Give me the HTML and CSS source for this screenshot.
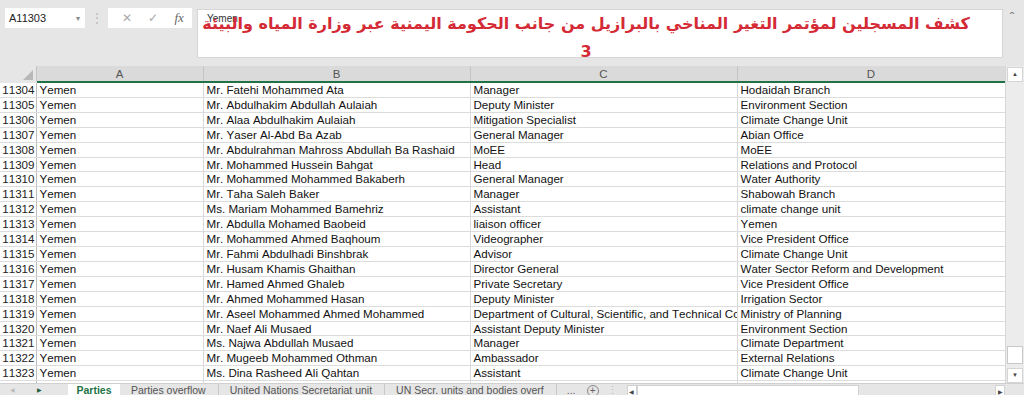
FILE: index.html
```html
<!DOCTYPE html>
<html lang="en">
<head>
    <meta charset="UTF-8">
    <meta name="viewport" content="width=device-width, initial-scale=1.0">
    <title>Parties - Yemen</title>
    <link rel="stylesheet" href="styles.css">
</head>
<body>
<div class="app">
    <div class="topbar">
        <div class="namebox">A11303<span class="caret">&#9662;</span></div>
        <div class="vdots">&#8942;</div>
        <div class="fxbox">
            <span class="fxicon">&#10005;</span>
            <span class="fxicon">&#10003;</span>
            <span class="fxicon fx">fx</span>
        </div>
        <div class="formula">
            <span class="fvalue">Yemen</span>
            <div class="caption" dir="rtl">كشف المسجلين  لمؤتمر التغير المناخي بالبرازيل من جانب الحكومة اليمنية عبر وزارة المياه والبيئة<br>3</div>
        </div>
        <div class="collapse">&#710;</div>
    </div>

    <div class="sheet">
        <div class="gridwrap">
            <table class="grid">
                <colgroup>
                    <col class="c-row"><col class="c-a"><col class="c-b"><col class="c-c"><col class="c-d">
                </colgroup>
                <thead>
                    <tr><th class="corner"><span class="tri"></span></th><th>A</th><th>B</th><th>C</th><th>D</th></tr>
                </thead>
                <tbody>
                    <tr><td class="rn">11304</td><td>Yemen</td><td>Mr. Fatehi Mohammed Ata</td><td>Manager</td><td>Hodaidah Branch</td></tr>
                    <tr><td class="rn">11305</td><td>Yemen</td><td>Mr. Abdulhakim Abdullah Aulaiah</td><td>Deputy Minister</td><td>Environment Section</td></tr>
                    <tr><td class="rn">11306</td><td>Yemen</td><td>Mr. Alaa Abdulhakim Aulaiah</td><td>Mitigation Specialist</td><td>Climate Change Unit</td></tr>
                    <tr><td class="rn">11307</td><td>Yemen</td><td>Mr. Yaser Al-Abd Ba Azab</td><td>General Manager</td><td>Abian Office</td></tr>
                    <tr><td class="rn">11308</td><td>Yemen</td><td>Mr. Abdulrahman Mahross Abdullah Ba Rashaid</td><td>MoEE</td><td>MoEE</td></tr>
                    <tr><td class="rn">11309</td><td>Yemen</td><td>Mr. Mohammed Hussein Bahgat</td><td>Head</td><td>Relations and Protocol</td></tr>
                    <tr><td class="rn">11310</td><td>Yemen</td><td>Mr. Mohammed Mohammed Bakaberh</td><td>General Manager</td><td>Water Authority</td></tr>
                    <tr><td class="rn">11311</td><td>Yemen</td><td>Mr. Taha Saleh Baker</td><td>Manager</td><td>Shabowah Branch</td></tr>
                    <tr><td class="rn">11312</td><td>Yemen</td><td>Ms. Mariam Mohammed Bamehriz</td><td>Assistant</td><td>climate change unit</td></tr>
                    <tr><td class="rn">11313</td><td>Yemen</td><td>Mr. Abdulla Mohamed Baobeid</td><td>liaison officer</td><td>Yemen</td></tr>
                    <tr><td class="rn">11314</td><td>Yemen</td><td>Mr. Mohammed Ahmed Baqhoum</td><td>Videographer</td><td>Vice President Office</td></tr>
                    <tr><td class="rn">11315</td><td>Yemen</td><td>Mr. Fahmi Abdulhadi Binshbrak</td><td>Advisor</td><td>Climate Change Unit</td></tr>
                    <tr><td class="rn">11316</td><td>Yemen</td><td>Mr. Husam Khamis Ghaithan</td><td>Director General</td><td>Water Sector Reform and Development</td></tr>
                    <tr><td class="rn">11317</td><td>Yemen</td><td>Mr. Hamed Ahmed Ghaleb</td><td>Private Secretary</td><td>Vice President Office</td></tr>
                    <tr><td class="rn">11318</td><td>Yemen</td><td>Mr. Ahmed Mohammed Hasan</td><td>Deputy Minister</td><td>Irrigation Sector</td></tr>
                    <tr><td class="rn">11319</td><td>Yemen</td><td>Mr. Aseel Mohammed Ahmed Mohammed</td><td>Department of Cultural, Scientific, and Technical Cooperation</td><td>Ministry of Planning</td></tr>
                    <tr><td class="rn">11320</td><td>Yemen</td><td>Mr. Naef Ali Musaed</td><td>Assistant Deputy Minister</td><td>Environment Section</td></tr>
                    <tr><td class="rn">11321</td><td>Yemen</td><td>Ms. Najwa Abdullah Musaed</td><td>Manager</td><td>Climate Department</td></tr>
                    <tr><td class="rn">11322</td><td>Yemen</td><td>Mr. Mugeeb Mohammed Othman</td><td>Ambassador</td><td>External Relations</td></tr>
                    <tr><td class="rn">11323</td><td>Yemen</td><td>Ms. Dina Rasheed Ali Qahtan</td><td>Assistant</td><td>Climate Change Unit</td></tr>
                    <tr><td class="rn"></td><td></td><td></td><td></td><td></td></tr>
                </tbody>
            </table>
        </div>
        <div class="vscroll">
            <div class="sbtn">&#9650;</div>
            <div class="vtrack"><div class="vthumb"></div></div>
            <div class="sbtn">&#9660;</div>
        </div>
    </div>

    <div class="tabbar">
        <div class="navs"><span class="nav dim">&#9664;</span><span class="nav">&#9654;</span></div>
        <div class="tab active">Parties</div>
        <div class="tab">Parties overflow</div>
        <div class="tab">United Nations Secretariat unit</div>
        <div class="tab">UN Secr. units and bodies overf</div>
        <div class="more">...</div>
        <div class="plus">+</div>
        <div class="tdots">&#8942;</div>
        <div class="hscroll">
            <span class="hbtn">&#9664;</span>
            <div class="hthumb"></div>
            <div class="hrest"></div>
            <span class="hbtn">&#9654;</span>
        </div>
    </div>
</div>
</body>
</html>
```

FILE: styles.css
```css
body {
    margin: 0;
    font-family: "Liberation Sans", Arial, sans-serif;
    background: #e6e6e6;
    overflow: hidden;
}
.app {
    height: 395px;
    display: flex;
    flex-direction: column;
    overflow: hidden;
}

/* formula bar */
.topbar {
    height: 66px;
    flex: none;
    display: flex;
    align-items: flex-start;
    padding: 8px 0 0 5px;
    box-sizing: border-box;
    background: #e6e6e6;
}
.namebox {
    width: 80px;
    height: 20px;
    background: #fff;
    font-size: 11px;
    color: #222;
    display: flex;
    align-items: center;
    justify-content: space-between;
    padding: 0 5px 0 4px;
    box-sizing: border-box;
}
.caret {
    font-size: 8px;
    color: #888;
}
.vdots {
    width: 23px;
    text-align: center;
    color: #b8b8b8;
    font-size: 12px;
    line-height: 20px;
}
.fxbox {
    width: 84px;
    height: 20px;
    background: #fff;
    display: flex;
    align-items: center;
    justify-content: space-around;
    padding: 0 0 0 6px;
    box-sizing: border-box;
}
.fxicon {
    color: #aaa;
    font-size: 12px;
}
.fxicon.fx {
    font-family: "Liberation Serif", serif;
    font-style: italic;
    color: #666;
    font-size: 13px;
}
.formula {
    position: relative;
    width: 806px;
    height: 49px;
    margin: 1px 0 0 5px;
    background: #fff;
    border: 1px solid #d6d6d6;
    box-sizing: border-box;
}
.fvalue {
    position: absolute;
    left: 9px;
    top: 3px;
    font-size: 10px;
    color: #333;
}
.caption {
    position: absolute;
    left: -6px;
    right: 22px;
    top: 0;
    text-align: center;
    white-space: nowrap;
    font-family: "DejaVu Sans", sans-serif;
    font-weight: bold;
    font-size: 16px;
    line-height: 28px;
    color: #d42a35;
}
.collapse {
    width: 18px;
    text-align: center;
    font-size: 14px;
    color: #777;
    line-height: 20px;
}

/* sheet */
.sheet {
    flex: none;
    height: 317px;
    display: flex;
    background: #fff;
}
.gridwrap {
    width: 1005px;
    overflow: hidden;
}
.grid {
    border-collapse: collapse;
    table-layout: fixed;
    width: 1005px;
    font-size: 11.6px;
    color: #111;
    font-kerning: none;
    font-variant-numeric: tabular-nums;
}
.c-row { width: 36px; }
.c-a { width: 167px; }
.c-b { width: 267px; }
.c-c { width: 267px; }
.c-d { width: 268px; }
.grid th {
    height: 15px;
    padding: 0;
    background: #dadada;
    color: #555;
    font-weight: normal;
    font-size: 11.5px;
    border-right: 1px solid #c4c4c4;
    border-bottom: 2px solid #217346;
}
.grid th.corner {
    position: relative;
    background: #e6e6e6;
    border-bottom-color: #e6e6e6;
}
.tri {
    position: absolute;
    right: 3px;
    bottom: 1px;
    width: 0;
    height: 0;
    border-left: 10px solid transparent;
    border-bottom: 10px solid #b8b8b8;
}
.grid td {
    height: 13.9px;
    padding: 0 0 0 3px;
    line-height: 13.9px;
    white-space: nowrap;
    overflow: hidden;
    border-right: 1px solid #d9d9d9;
    border-bottom: 1px solid #dcdcdc;
}
.grid td.rn {
    text-align: right;
    padding: 0 1px 0 0;
    color: #222;
    border-right: 1px solid #bdbdbd;
}

.vscroll {
    width: 19px;
    display: flex;
    flex-direction: column;
    background: #ececec;
    border-left: 1px solid #d6d6d6;
    box-sizing: border-box;
}
.sbtn {
    height: 15px;
    margin: 1px 1px 0;
    background: #fff;
    border: 1px solid #d4d4d4;
    box-sizing: border-box;
    font-size: 6px;
    color: #444;
    text-align: center;
    line-height: 13px;
}
.vtrack {
    flex: 1;
    display: flex;
    flex-direction: column;
    justify-content: flex-end;
    padding: 0 1px 3px;
}
.vthumb {
    height: 18px;
    background: #fff;
    border: 1px solid #c8c8c8;
    box-sizing: border-box;
}

/* sheet tabs */
.tabbar {
    flex: none;
    height: 20px;
    display: flex;
    align-items: flex-start;
    background: #e6e6e6;
    font-size: 10.5px;
    color: #444;
    border-top: 1px solid #d0d0d0;
}
.navs {
    width: 68px;
    display: flex;
    gap: 22px;
    padding-left: 10px;
    box-sizing: border-box;
}
.nav {
    font-size: 6px;
    line-height: 13px;
    color: #1e5e3a;
}
.nav.dim {
    color: #bbb;
}
.tab {
    padding: 0 12px 0 11px;
    line-height: 13px;
    border-right: 1px solid #c8c8c8;
    color: #555;
}
.tab.active {
    width: 52px;
    padding: 0;
    text-align: center;
    box-sizing: border-box;
    background: #fff;
    color: #217346;
    font-weight: bold;
    border-right: 0;
    border-bottom: 2px solid #217346;
}
.more {
    width: 20px;
    padding-left: 10px;
    line-height: 12px;
    color: #666;
}
.plus {
    width: 10px;
    height: 10px;
    margin-top: 1px;
    border: 1px solid #888;
    border-radius: 50%;
    font-size: 10px;
    line-height: 10px;
    text-align: center;
    color: #666;
}
.tdots {
    width: 28px;
    text-align: center;
    color: #bbb;
    font-size: 11px;
    line-height: 13px;
}
.hscroll {
    flex: 1;
    display: flex;
    height: 12px;
    margin-top: 1px;
    padding-right: 19px;
}
.hbtn {
    width: 10px;
    font-size: 6px;
    line-height: 12px;
    text-align: center;
    color: #444;
    background: #fff;
    border: 1px solid #d2d2d2;
    box-sizing: border-box;
}
.hthumb {
    width: 222px;
    background: #fff;
    border: 1px solid #d2d2d2;
    box-sizing: border-box;
}
.hrest {
    flex: 1;
}
```
